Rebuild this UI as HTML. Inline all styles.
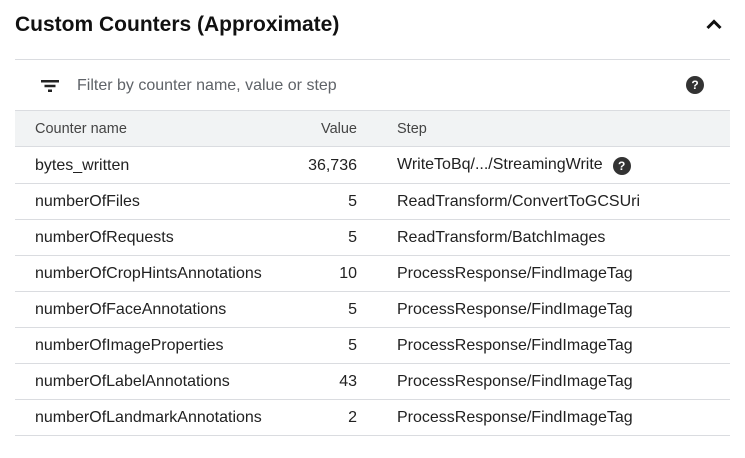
<!DOCTYPE html>
<html><head><style>
body{margin:0;background:#fff;font-family:"Liberation Sans",Arial,sans-serif;color:#212121;width:745px;height:458px;overflow:hidden;position:relative}
.t{position:absolute;left:15px;top:13px;font-size:21px;font-weight:bold;color:#111}
.chev{position:absolute;left:705px;top:17px}
.filter{position:absolute;left:15px;top:59px;width:715px;height:52px;border-top:1px solid #dadce0;border-bottom:1px solid #dadce0;box-sizing:border-box}
.ph{position:absolute;left:62px;top:17px;font-size:16px;color:#5f6368}
table{position:absolute;left:15px;top:111px;width:715px;border-collapse:collapse;font-size:16px}
td,th{height:34px;padding:1px 0 0 0;border-bottom:1px solid #dadce0;text-align:left;font-weight:normal}
th{background:#f1f3f4;color:#444;font-size:14.5px}
td{color:#212121}
.c1{padding-left:20px;width:240px}
.c2{text-align:right;width:82px}
.c3{padding-left:40px}
.q{display:inline-block;width:18px;height:18px;border-radius:50%;background:#333;color:#fff;font-size:12px;font-weight:bold;text-align:center;line-height:18px;vertical-align:-1px;margin-left:10px}
</style></head><body>
<div class="t">Custom Counters (Approximate)</div>
<svg class="chev" width="18" height="14" viewBox="0 0 18 14"><path d="M2.5 11 L9 4.5 L15.5 11" fill="none" stroke="#111" stroke-width="3"/></svg>
<div class="filter">
<svg style="position:absolute;left:26px;top:20px" width="18" height="12" viewBox="0 0 18 12"><rect x="0" y="0" width="18" height="2.5" fill="#222"/><rect x="3.5" y="4.75" width="11" height="2.5" fill="#222"/><rect x="7" y="9.5" width="4" height="2.5" fill="#222"/></svg>
<div class="ph">Filter by counter name, value or step</div>
<span class="q" style="position:absolute;left:671px;top:16px;margin:0">?</span>
</div>
<table>
<tr><th class="c1">Counter name</th><th class="c2" style="text-align:right">Value</th><th class="c3">Step</th></tr>
<tr><td class="c1" style="height:35px">bytes_written</td><td class="c2">36,736</td><td class="c3">WriteToBq/.../StreamingWrite<span class="q">?</span></td></tr>
<tr><td class="c1">numberOfFiles</td><td class="c2">5</td><td class="c3">ReadTransform/ConvertToGCSUri</td></tr>
<tr><td class="c1">numberOfRequests</td><td class="c2">5</td><td class="c3">ReadTransform/BatchImages</td></tr>
<tr><td class="c1">numberOfCropHintsAnnotations</td><td class="c2">10</td><td class="c3">ProcessResponse/FindImageTag</td></tr>
<tr><td class="c1">numberOfFaceAnnotations</td><td class="c2">5</td><td class="c3">ProcessResponse/FindImageTag</td></tr>
<tr><td class="c1">numberOfImageProperties</td><td class="c2">5</td><td class="c3">ProcessResponse/FindImageTag</td></tr>
<tr><td class="c1">numberOfLabelAnnotations</td><td class="c2">43</td><td class="c3">ProcessResponse/FindImageTag</td></tr>
<tr><td class="c1">numberOfLandmarkAnnotations</td><td class="c2">2</td><td class="c3">ProcessResponse/FindImageTag</td></tr>
</table>
</body></html>
